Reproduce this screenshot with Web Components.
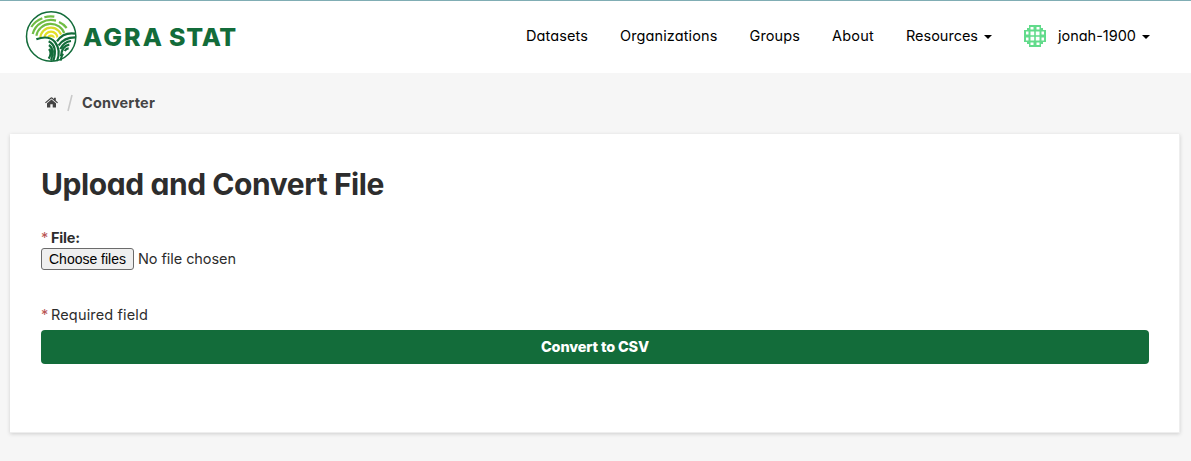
<!DOCTYPE html>
<html lang="en"><head><meta charset="utf-8"><title>Converter - Agra Stat</title>
<style>html,body{margin:0;background:#f6f6f6}body{font-family:Inter,"Open Sans",sans-serif;font-size:14.5px;color:#2d2d2d;overflow:hidden}</style></head>
<body><converter-app></converter-app>
<script>
const define=(name,html,after)=>customElements.define(name,class extends HTMLElement{
 connectedCallback(){if(this.shadowRoot)return;const t=document.createElement('template');t.innerHTML=html;
 this.attachShadow({mode:'open'}).append(t.content.cloneNode(true));if(after)after(this);}
});

// A single-line label whose tracking is adjusted to a given width.
define('fit-label','<style>:host{display:inline-block;white-space:nowrap;font-feature-settings:"cv11","ss03"}span{display:inline-block}</style><span><slot></slot></span>',el=>{
 const w=+el.getAttribute('width'),s=el.shadowRoot.querySelector('span'),n=el.textContent.length;
 el.style.width=w+'px';
 s.style.letterSpacing='0px';
 s.style.letterSpacing=((w-s.getBoundingClientRect().width)/n)+'px';
});

define('brand-logo',`<style>:host{display:flex;align-items:center;height:64px}svg{display:block;width:64px;height:64px;flex:none}
fit-label{font:800 25px/30px Inter,sans-serif;color:#136c3a;margin-top:2px}fit-label:first-of-type{margin-left:-1px}.s{margin-left:5px}</style>
<svg viewBox="0 0 192 192" fill="none"><defs><clipPath id="sky"><path d="M20 20H172V82Q130 79 109 103Q80 93 51 103L25 94Z"/></clipPath></defs>
<circle cx="93.5" cy="97.5" r="74" stroke="#136c3a" stroke-width="4.5"/>
<g clip-path="url(#sky)" stroke-width="6.5"><circle cx="93" cy="103" r="8" stroke="#e4df27"/><circle cx="93" cy="103" r="20" stroke="#e4df27"/><circle cx="93" cy="103" r="32" stroke="#d8dc2b"/>
<path stroke="#70bd44" d="M49 95A44 44 0 0 1 134 90M38 90A57 57 0 0 1 108 50M117 54A57 57 0 0 1 140 72M34 69A69 69 0 0 1 67 43M73 40A69 69 0 0 1 103 38"/></g>
<g stroke="#136c3a" stroke-width="6.5"><path d="M49 106Q86 92 105 114Q124 140 111 171M111 112Q130 84 165 89M116 124Q133 99 168 100M121 135Q132 113 153 111M123 156Q126 125 148 122M122 170Q123 158 129 149M134 141Q139 133 146 133M86 112Q114 126 100 171M87 123Q105 136 93 170M87 135Q97 147 86 164"/></g></svg>
<fit-label width="81">AGRA</fit-label><fit-label class="s" width="68">STAT</fit-label>`);

define('nav-link',`<style>:host{display:flex;align-items:center;color:#000;font-size:14.5px;line-height:24px}i{display:none;width:0;height:0;border:4px solid transparent;border-top-color:#000;border-bottom:0;margin-left:6px;margin-top:2px}:host([menu]) i{display:block}</style><slot></slot><i></i>`);

define('user-avatar',`<style>:host{display:block;width:22px;height:22px;margin-right:12px}svg{display:block}</style>
<svg width="22" height="22" viewBox="0 0 22 22"><path fill="#62db8b" d="M5 0H17V3H19V5H22V17H19V19H17V22H5V19H3V17H0V5H3V3H5Z"/><path fill="#fff" d="M6.5 2h3v2.5h-3zM12.5 2h3v2.5h-3zM2 6.5h2.5v3H2zM2 12.5h2.5v3H2zM17.5 6.5H20v3h-2.5zM17.5 12.5H20v3h-2.5zM6.5 17.5h3V20h-3zM12.5 17.5h3V20h-3zM6.5 6.5h3.7v3.7H6.5zM11.8 6.5h3.7v3.7h-3.7zM6.5 11.8h3.7v3.7H6.5zM11.8 11.8h3.7v3.7h-3.7z"/></svg>`);

define('site-header',`<style>:host{display:flex;box-sizing:border-box;height:73px;background:#fff;border-top:1px solid #80adb4;padding:3px 41px 0 20px;justify-content:space-between;align-items:flex-start}nav{display:flex;gap:32px;align-items:center;height:64px}</style>
<brand-logo></brand-logo><nav><nav-link><fit-label width="62">Datasets</fit-label></nav-link><nav-link><fit-label width="97.5">Organizations</fit-label></nav-link><nav-link><fit-label width="50.5">Groups</fit-label></nav-link><nav-link><fit-label width="42">About</fit-label></nav-link><nav-link menu><fit-label width="72">Resources</fit-label></nav-link><nav-link menu><user-avatar></user-avatar><fit-label width="78">jonah-1900</fit-label></nav-link></nav>`);

define('bread-crumb',`<style>:host{display:flex;align-items:center;height:61px;box-sizing:border-box;padding:0 0 2px 45px;color:#444}fit-label{font-weight:700;line-height:20px}.slash{margin:0 9px 0 8px}svg{display:block}</style>
<svg width="13" height="11" viewBox="0 0 13 11"><path fill="#444" d="M2 6.2 6.5 2.5 11 6.2V10.5H7.7V7.3H5.3v3.2H2zM.8 6.3 0 5.4 5.8.6Q6.5.1 7.2.6L9 2.1V.8h1.8v2.8L13 5.4l-.8.9L6.5 1.6z"/></svg>
<svg class="slash" width="7" height="18" viewBox="0 0 7 18"><path d="M6 1 2 17" stroke="#c9c9c9" stroke-width="1.6"/></svg><fit-label width="73">Converter</fit-label>`);

define('file-picker',`<style>:host{display:flex;align-items:center;gap:4px;height:22px}button{box-sizing:border-box;width:93px;height:22px;border:1px solid #6b6b6b;border-radius:3px;background:#efefef;color:#000;padding:0 0 1px;font:14px/18px "Liberation Sans",sans-serif;white-space:nowrap}button fit-label{font-feature-settings:normal;line-height:18px;vertical-align:top}fit-label{line-height:22px}</style>
<button><fit-label width="77">Choose files</fit-label></button><fit-label width="98">No file chosen</fit-label>`);

define('green-button',`<style>:host{display:block}button{display:flex;align-items:center;justify-content:center;width:100%;height:34px;border:0;border-radius:4px;background:#136c3a;color:#fff;font:800 14.5px/20px Inter,sans-serif;padding:0}</style><button><slot></slot></button>`);

define('upload-card',`<style>:host{display:block;box-sizing:border-box;height:299px;margin:0 11px 0 10px;padding:31px 30px 0 31px;background:#fff;border:1px solid #eee;border-width:0 1px 1px 0;box-shadow:0 1px 4px rgba(0,0,0,.16)}h1{margin:0;font-size:30px;line-height:38px;font-weight:700;color:#2d2d2d}.row{display:flex;gap:4px;line-height:20px}.name{margin-top:25px;font-weight:700}.star{color:#b95453;font-weight:400;width:6px}.req{margin-top:35px;margin-bottom:5px}</style>
<h1><fit-label width="343">Upload and Convert File</fit-label></h1>
<div class="row name"><span class="star">*</span><fit-label width="29">File:</fit-label></div><file-picker></file-picker>
<div class="row req"><span class="star">*</span><fit-label width="97">Required field</fit-label></div>
<green-button><fit-label width="108">Convert to CSV</fit-label></green-button>`);

define('converter-app',`<style>:host{display:block;height:461px;background:#f6f6f6}</style><site-header></site-header><bread-crumb></bread-crumb><upload-card></upload-card>`);
</script></body></html>
